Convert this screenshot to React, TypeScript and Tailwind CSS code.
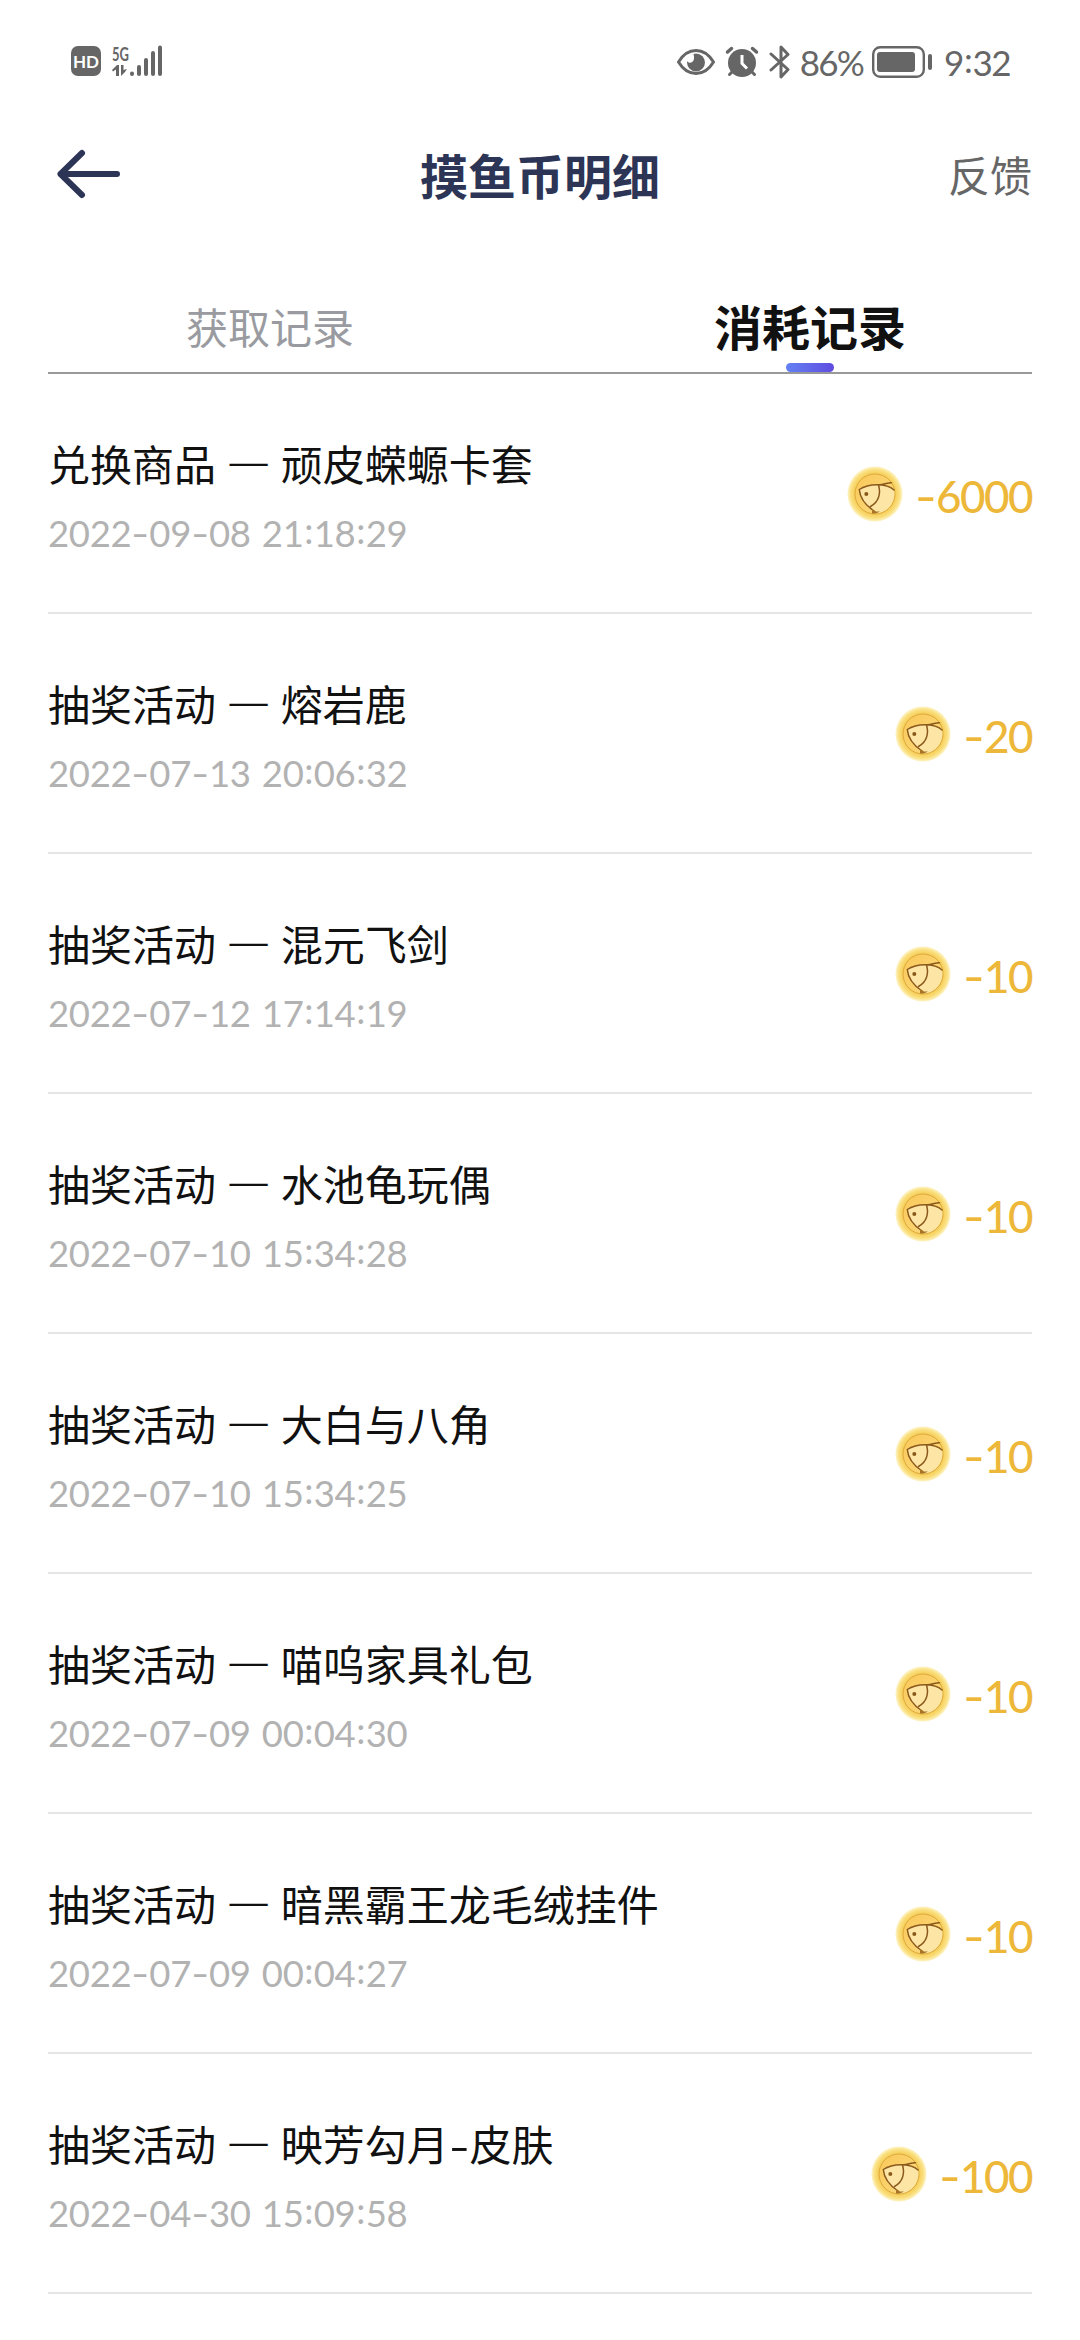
import { clsx } from 'clsx'

interface LogRecord {
  title: string
  time: string
  amount: number
}

const records: LogRecord[] = [
  { title: '兑换商品 一 顽皮蝾螈卡套', time: '2022-09-08 21:18:29', amount: -6000 },
  { title: '抽奖活动 一 熔岩鹿', time: '2022-07-13 20:06:32', amount: -20 },
  { title: '抽奖活动 一 混元飞剑', time: '2022-07-12 17:14:19', amount: -10 },
  { title: '抽奖活动 一 水池龟玩偶', time: '2022-07-10 15:34:28', amount: -10 },
  { title: '抽奖活动 一 大白与八角', time: '2022-07-10 15:34:25', amount: -10 },
  { title: '抽奖活动 一 喵呜家具礼包', time: '2022-07-09 00:04:30', amount: -10 },
  { title: '抽奖活动 一 暗黑霸王龙毛绒挂件', time: '2022-07-09 00:04:27', amount: -10 },
  { title: '抽奖活动 一 映芳勾月-皮肤', time: '2022-04-30 15:09:58', amount: -100 },
]

// Widens hyphens, lifts colons and thins the separator dash
function Spaced({ text }: { text: string }) {
  return (
    <>
      {text.split(/([-:一])/).map((part, i) => {
        if (part === '-') {
          return (
            <span key={i} className="inline-block w-[0.49em] scale-x-[1.35] text-center">
              -
            </span>
          )
        }
        if (part === ':') {
          return (
            <span key={i} className="relative -top-[0.09em] inline-block w-[0.28em] text-center">
              :
            </span>
          )
        }
        if (part === '一') {
          return (
            <span key={i} className="inline-block font-light">
              一
            </span>
          )
        }
        return part
      })}
    </>
  )
}

function SignalIcons() {
  return (
    <div className="flex items-center gap-[11px]">
      <div className="flex h-[30px] w-[30px] items-center justify-center rounded-[7px] bg-[#666] text-[17px] leading-none font-bold text-white">
        HD
      </div>
      <div className="flex items-end">
        <div className="flex w-[17px] flex-col">
          <span className="origin-left scale-x-[0.72] text-[18px] leading-[17px] font-bold">5G</span>
          <svg width="17" height="14" viewBox="0 0 17 14" className="fill-current">
            <path d="M0 7L5 2H7V13H4V6.500L1 8.500ZM9 2H11.500V7L15 6L13 9L9 13Z" />
          </svg>
        </div>
        <svg width="34" height="32" viewBox="0 0 34 32" className="stroke-current">
          <path d="M3 28.500V29M10 22V29M17 15V29M24 8V29M31 2.500V29" strokeWidth="4" strokeLinecap="round" />
        </svg>
      </div>
    </div>
  )
}

function EyeIcon() {
  return (
    <svg width="38" height="26" viewBox="0 0 38 26" className="fill-none">
      <path
        d="M1.500 13C6 5.500 12 1.500 19 1.500S32 5.500 36.500 13C32 20.500 26 24.500 19 24.500S6 20.500 1.500 13Z"
        stroke="#666"
        strokeWidth="3"
        strokeLinejoin="round"
      />
      <circle cx="19" cy="13.500" r="9" fill="#666" />
      <path d="M10 12C12 15.500 19 14 16.500 5C12.500 5 10 8 10 12Z" fill="#fff" />
    </svg>
  )
}

function AlarmIcon() {
  return (
    <svg width="34" height="32" viewBox="0 0 34 32" className="fill-none stroke-[#666]">
      <path d="M2.500 6L6.500 2.500M31.500 6L27.500 2.500" strokeWidth="3.500" strokeLinecap="round" />
      <path d="M8 25L4.500 28.500M26 25L29.500 28.500" strokeWidth="3" strokeLinecap="round" />
      <circle cx="17" cy="17" r="14" fill="#666" stroke="none" />
      <path d="M17 9V17.500L22 22.500" stroke="#fff" strokeWidth="3" />
    </svg>
  )
}

function BluetoothIcon() {
  return (
    <svg width="22" height="34" viewBox="0 0 22 34" className="fill-none stroke-[#666]">
      <path
        d="M2 9L19 24.500L12 32V2L19 9.500L2 25"
        strokeWidth="3"
        strokeLinecap="round"
        strokeLinejoin="round"
      />
    </svg>
  )
}

function BatteryIcon() {
  return (
    <svg width="60" height="32" viewBox="0 0 60 32">
      <rect x="1.200" y="1.200" width="50.600" height="29.600" rx="7" className="fill-none stroke-[#666]" strokeWidth="2.400" />
      <rect x="5" y="6" width="38" height="20" rx="3" className="fill-[#666]" />
      <rect x="56" y="8" width="4" height="16" rx="2" className="fill-[#666]" />
    </svg>
  )
}

function StatusBar() {
  return (
    <div className="flex h-[121px] items-start justify-between pt-[45px] pr-[70px] pl-[71px] font-['Lato',sans-serif] text-[#666]">
      <SignalIcons />
      <div className="flex items-center">
        <EyeIcon />
        <div className="w-[10px]" />
        <AlarmIcon />
        <div className="w-[10px]" />
        <BluetoothIcon />
        <span className="ml-[9px] text-[35px] leading-[34px] tracking-[-1.8px]">86%</span>
        <div className="w-[9px]" />
        <BatteryIcon />
        <span className="ml-[12px] text-[35px] leading-[34px] tracking-[-1.6px]">
          <Spaced text="9:32" />
        </span>
      </div>
    </div>
  )
}

function Header() {
  return (
    <header className="flex h-[106px] items-center justify-between px-12">
      <svg width="90" height="62" viewBox="0 0 90 62" className="fill-none stroke-[#2d3556]">
        <path d="M69 31H12.500M34 10L12.500 31L34 52" strokeWidth="6" strokeLinecap="round" strokeLinejoin="round" />
      </svg>
      <h1 className="text-[48px] leading-none font-bold text-[#2d3556]">摸鱼币明细</h1>
      <button type="button" className="w-[90px] text-right text-[42px] leading-none text-[#666]">
        反馈
      </button>
    </header>
  )
}

function Tabs() {
  return (
    <div className="flex h-[147px] flex-col">
      <div className="flex flex-1">
        {['获取记录', '消耗记录'].map((label, i) => (
          <button
            key={label}
            type="button"
            className={clsx(
              'relative flex flex-1 items-end justify-center leading-none',
              i === 1 ? 'pb-[23px] text-[48px] font-bold text-[#111]' : 'pb-[25px] text-[42px] text-[#999ba0]',
            )}
          >
            {label}
            {i === 1 && (
              <span className="absolute bottom-0 h-[9px] w-12 rounded-full bg-linear-to-r from-[#6380f3] to-[#5f4be0]" />
            )}
          </button>
        ))}
      </div>
      <div className="mx-12 h-[2px] bg-[#999]" />
    </div>
  )
}

function Coin() {
  return (
    <svg width="56" height="56" viewBox="0 0 56 56" className="fill-none">
      <defs>
        <radialGradient id="rim">
          <stop offset="0.75" stopColor="#f7d05c" />
          <stop offset="0.88" stopColor="#fadf7e" />
          <stop offset="1" stopColor="#fef4c8" />
        </radialGradient>
        <linearGradient id="face" x1="0" y1="0" x2="1" y2="1">
          <stop offset="0" stopColor="#fac858" />
          <stop offset="1" stopColor="#fcdc80" />
        </linearGradient>
      </defs>
      <circle cx="28" cy="28" r="27.500" fill="url(#rim)" />
      <circle cx="28" cy="28" r="20" fill="url(#face)" stroke="#dca93c" />
      <path
        d="M12.300 23.500C18 19.500 25 18.500 31.700 18.700C38 19 44 21 47 24C49 34 42 47 28 47.500C20 41 14 34 12.300 23.500Z"
        fill="#fde5a6"
      />
      <path
        d="M12.300 23.500C18 19.500 25 18.500 31.700 18.700C38 19 44 21 47 24M12.300 23.500C13 32 18 39 27 45M31.500 19C34 27 32 36 23.500 40.500M31.700 18.700C36 19 39 17 44.500 16.700"
        stroke="#8a5a1c"
        strokeWidth="1.500"
        strokeLinecap="round"
      />
      <path d="M25 43L29 45.500L33 45.500L29 47.500H25Z" fill="#a87425" />
      <circle cx="19.300" cy="28" r="2" fill="#8a5a1c" />
    </svg>
  )
}

function RecordRow({ record }: { record: LogRecord }) {
  return (
    <li className="flex h-[240px] items-start justify-between border-b-2 border-[#e5e5e5]">
      <div className="flex flex-col pt-[59px]">
        <span className="text-[42px] leading-[60px] text-[#111] [word-spacing:2px]">
          <Spaced text={record.title} />
        </span>
        <span className="pt-[15px] font-['Lato',sans-serif] text-[36.5px] leading-[50px] tracking-[-0.3px] text-[#b2b2b2] [word-spacing:2px]">
          <Spaced text={record.time} />
        </span>
      </div>
      <div className="flex items-start gap-[11px] pt-[92px]">
        <Coin />
        <span className="font-['Lato',sans-serif] text-[44px] leading-[60px] font-medium tracking-[-1.5px] text-[#edb83a]">
          <Spaced text={String(record.amount)} />
        </span>
      </div>
    </li>
  )
}

export default function App() {
  return (
    <div className="h-[2340px] w-[1080px] overflow-hidden bg-white font-['Noto_Sans_CJK_SC',sans-serif]">
      <StatusBar />
      <Header />
      <Tabs />
      <ul className="px-12">
        {records.map((record) => (
          <RecordRow key={record.time} record={record} />
        ))}
      </ul>
    </div>
  )
}
